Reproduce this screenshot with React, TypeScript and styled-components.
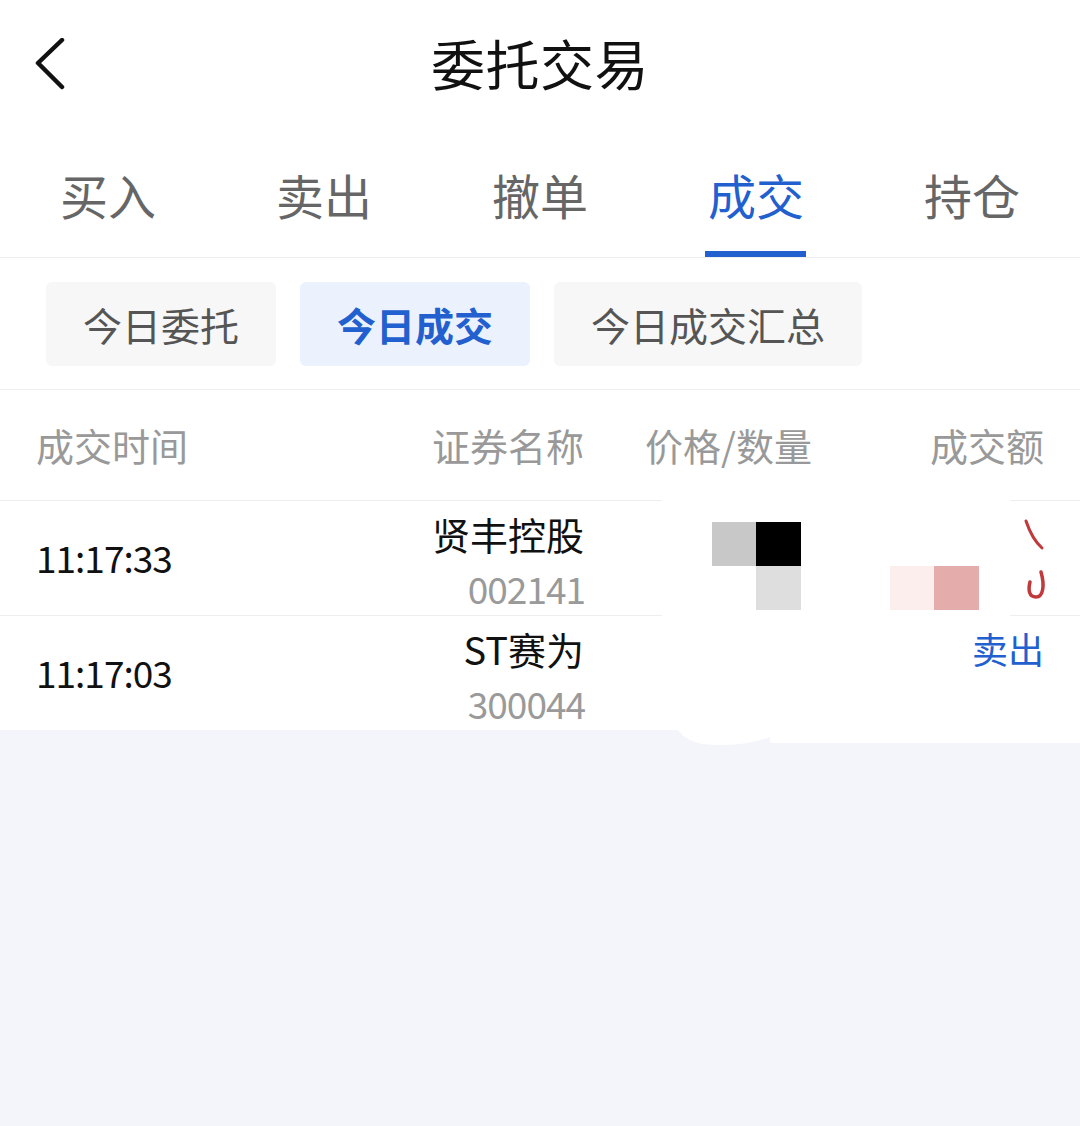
import React from "react";
import styled, { createGlobalStyle } from "styled-components";

const GlobalStyle = createGlobalStyle`
  html, body { margin: 0; padding: 0; }
  body {
    background: #f4f5fa;
    font-family: "Noto Sans CJK SC", "Noto Sans", sans-serif;
  }
  * { box-sizing: border-box; }
`;

const BLUE = "#2260cf";

const Page = styled.div`
  position: relative;
  width: 1080px;
  min-height: 1126px;
  background: #f4f5fa;
`;

const Top = styled.div`
  background: #fff;
`;

const NavBar = styled.div`
  height: 130px;
  display: grid;
  grid-template-columns: 1fr auto 1fr;
  align-items: center;
  padding: 0 34px;
`;

const BackButton = styled.div`
  display: flex;
  align-items: center;
`;

const Title = styled.div`
  font-size: 54px;
  line-height: 1;
  color: #111;
  letter-spacing: 0.5px;
  margin-top: -4px;
`;

const TabBar = styled.div`
  height: 128px;
  display: flex;
  border-bottom: 1px solid #eeeeee;
`;

const Tab = styled.div<{ $active?: boolean }>`
  position: relative;
  flex: 1;
  display: flex;
  align-items: center;
  justify-content: center;
  font-size: 48px;
  line-height: 1;
  color: ${(p) => (p.$active ? BLUE : "#666")};
  &::after {
    content: "";
    display: ${(p) => (p.$active ? "block" : "none")};
    position: absolute;
    left: 50%;
    bottom: 0;
    width: 101px;
    height: 6px;
    margin-left: -51px;
    background: ${BLUE};
  }
`;

const SubTabBar = styled.div`
  display: flex;
  gap: 24px;
  padding: 24px 46px 23px;
  border-bottom: 1px solid #eeeeee;
`;

const SubTab = styled.div<{ $active?: boolean }>`
  height: 84px;
  padding: 0 37px;
  display: flex;
  align-items: center;
  border-radius: 6px;
  font-size: 39px;
  line-height: 1;
  font-weight: ${(p) => (p.$active ? 700 : 400)};
  color: ${(p) => (p.$active ? BLUE : "#555")};
  background: ${(p) => (p.$active ? "#ebf2fd" : "#f7f7f7")};
`;

const Grid = styled.div`
  display: grid;
  grid-template-columns: 274px 274px 1fr auto;
  padding: 0 36px;
`;

const HeaderRow = styled(Grid)`
  height: 111px;
  align-items: center;
  border-bottom: 1px solid #eeeeee;
  font-size: 38px;
  line-height: 1;
  color: #999;
`;

const Cell = styled.div<{ $align?: "left" | "right"; $indent?: number }>`
  text-align: ${(p) => p.$align || "left"};
  padding-left: ${(p) => p.$indent || 0}px;
`;

const Row = styled(Grid)<{ $last?: boolean }>`
  height: ${(p) => (p.$last ? 114 : 115)}px;
  border-bottom: ${(p) => (p.$last ? "none" : "1px solid #eeeeee")};
  background: #fff;
`;

const TimeCell = styled.div`
  display: flex;
  align-items: center;
  padding-bottom: 3px;
  font-size: 37px;
  letter-spacing: -1px;
  color: #111;
`;

const Stack = styled.div<{ $align?: "left" | "right" }>`
  padding-top: 5px;
  display: flex;
  flex-direction: column;
  align-items: ${(p) => (p.$align === "right" ? "flex-end" : "flex-start")};
  font-size: 38px;
  line-height: 55px;
`;

const Primary = styled.div<{ $color?: string; $size?: number }>`
  color: ${(p) => p.$color || "#111"};
  font-size: ${(p) => p.$size || 38}px;
`;

const Secondary = styled.div`
  color: #9a9a9a;
  font-size: 37px;
  letter-spacing: -1px;
  margin-right: -1px;
`;

const Overlay = styled.svg`
  position: absolute;
  left: 0;
  top: 0;
  width: 1080px;
  height: 1126px;
  pointer-events: none;
`;

const trades = [
  { time: "11:17:33", name: "贤丰控股", code: "002141", side: "" },
  { time: "11:17:03", name: "ST赛为", code: "300044", side: "卖出" },
];

export default function App() {
  return (
    <Page>
      <GlobalStyle />
      <Top>
        <NavBar>
          <BackButton>
            <svg width="32" height="54" viewBox="0 0 32 54">
              <polyline
                points="28,2 4,25 28,49"
                fill="none"
                stroke="#111"
                strokeWidth="4.5"
                strokeLinecap="round"
                strokeLinejoin="round"
              />
            </svg>
          </BackButton>
          <Title>委托交易</Title>
          <div />
        </NavBar>
        <TabBar>
          <Tab>买入</Tab>
          <Tab>卖出</Tab>
          <Tab>撤单</Tab>
          <Tab $active>成交</Tab>
          <Tab>持仓</Tab>
        </TabBar>
        <SubTabBar>
          <SubTab>今日委托</SubTab>
          <SubTab $active>今日成交</SubTab>
          <SubTab>今日成交汇总</SubTab>
        </SubTabBar>
        <HeaderRow>
          <Cell>成交时间</Cell>
          <Cell $align="right">证券名称</Cell>
          <Cell $indent={61}>价格/数量</Cell>
          <Cell $align="right">成交额</Cell>
        </HeaderRow>
        {trades.map((t, i) => (
          <Row key={t.time} $last={i === trades.length - 1}>
            <TimeCell>{t.time}</TimeCell>
            <Stack $align="right">
              <Primary>{t.name}</Primary>
              <Secondary>{t.code}</Secondary>
            </Stack>
            <div />
            <Stack $align="right">
              <Primary $color={BLUE} $size={36}>
                {t.side || "\u00a0"}
              </Primary>
            </Stack>
          </Row>
        ))}
      </Top>
      <Overlay viewBox="0 0 1080 1126">
        <path
          d="M662 476 H1010 V617.5 H965 V730 H1080 V743 H770 V737 Q740 748 702 744 Q686 741 678 730 H649 V617.5 H662 Z"
          fill="#ffffff"
        />
        <rect x="712" y="522" width="44" height="44" fill="#c8c8c8" />
        <rect x="756" y="522" width="45" height="44" fill="#000000" />
        <rect x="756" y="566" width="45" height="44" fill="#dedede" />
        <rect x="890" y="566" width="44" height="44" fill="#fdeeee" />
        <rect x="934" y="566" width="45" height="44" fill="#e4adab" />
        <path
          d="M1026 521 Q1032 539 1042 548"
          fill="none"
          stroke="#c0393b"
          strokeWidth="3"
          strokeLinecap="round"
        />
        <path
          d="M1041 572 C1045 586 1043 597 1036 597 C1029 597 1028 590 1030 582"
          fill="none"
          stroke="#c0393b"
          strokeWidth="3.5"
          strokeLinecap="round"
        />
      </Overlay>
    </Page>
  );
}
